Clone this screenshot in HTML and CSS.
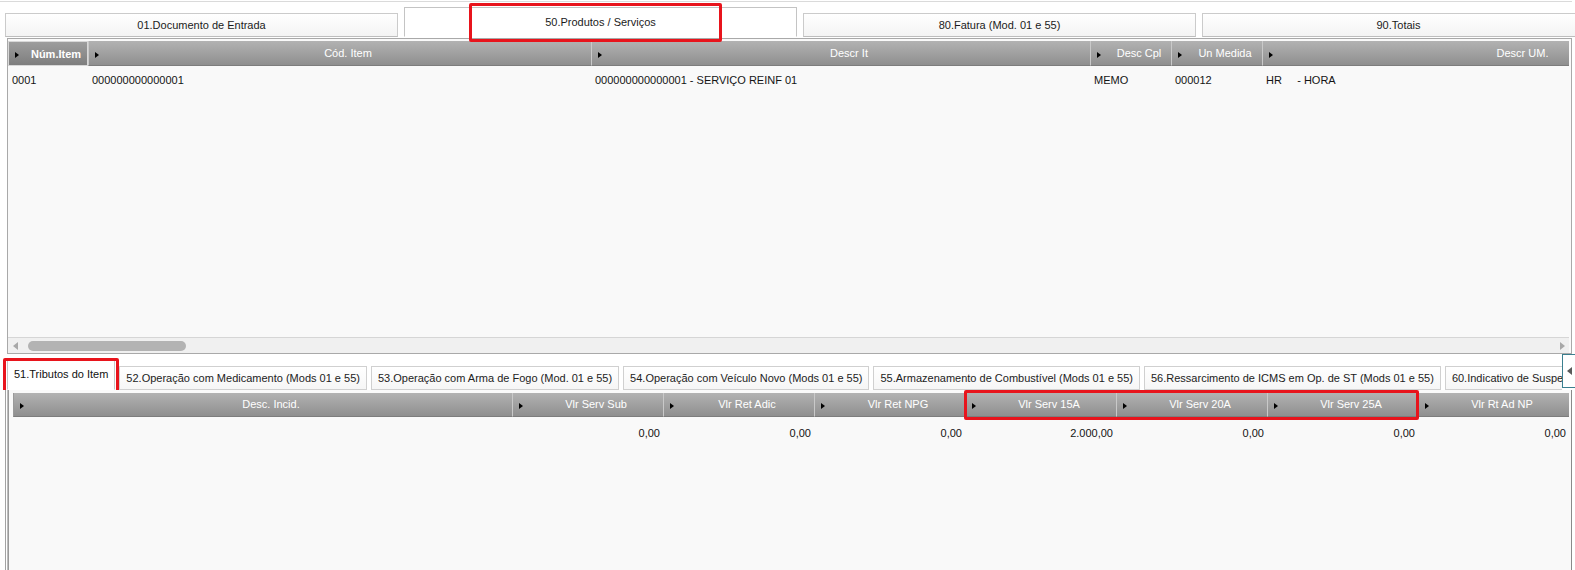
FILE: index.html
```html
<!DOCTYPE html>
<html lang="pt">
<head>
<meta charset="utf-8">
<title>Produtos / Serviços</title>
<link rel="stylesheet" href="styles.css">
</head>
<body>
<div class="top-rule"></div>
<div class="top-tabs">
  <div class="tab">01.Documento de Entrada</div>
  <div class="tab active">50.Produtos / Serviços<span class="mark mark-top"></span></div>
  <div class="tab">80.Fatura (Mod. 01 e 55)</div>
  <div class="tab">90.Totais</div>
</div>

<div class="grid grid-top">
  <div class="view">
    <div class="hdr">
      <div class="hc sel w80"><i class="tri"></i><span>Núm.Item</span></div>
      <div class="hc w503"><i class="tri"></i><span>Cód. Item</span></div>
      <div class="hc w499"><i class="tri"></i><span>Descr It</span></div>
      <div class="hc w81"><i class="tri"></i><span>Desc Cpl</span></div>
      <div class="hc w91"><i class="tri"></i><span>Un Medida</span></div>
      <div class="hc w504"><i class="tri"></i><span>Descr UM.</span></div>
    </div>
    <div class="row">
      <div class="dc w80">0001</div>
      <div class="dc w503">000000000000001</div>
      <div class="dc w499">000000000000001 - SERVIÇO REINF 01</div>
      <div class="dc w81">MEMO</div>
      <div class="dc w91">000012</div>
      <div class="dc w504 pre">HR     - HORA</div>
    </div>
  </div>
  <div class="hscroll">
    <i class="arr-l"></i>
    <div class="thumb"></div>
    <i class="arr-r"></i>
  </div>
</div>

<div class="sub-bar">
  <div class="sub-tabs">
    <div class="stab active">51.Tributos do Item<span class="mark mark-sub"></span></div>
    <div class="stab">52.Operação com Medicamento (Mods 01 e 55)</div>
    <div class="stab">53.Operação com Arma de Fogo (Mod. 01 e 55)</div>
    <div class="stab">54.Operação com Veículo Novo (Mods 01 e 55)</div>
    <div class="stab">55.Armazenamento de Combustível (Mods 01 e 55)</div>
    <div class="stab">56.Ressarcimento de ICMS em Op. de ST (Mods 01 e 55)</div>
    <div class="stab">60.Indicativo de Suspensão da Exigibilidade</div>
  </div>
  <div class="scroll-btn"><i class="arr-l dark"></i></div>
</div>

<div class="bpanel">
  <div class="bgrid">
    <div class="hdr bhdr">
      <div class="hc w499"><i class="tri"></i><span>Desc. Incid.</span></div>
      <div class="hc w151"><i class="tri"></i><span>Vlr Serv Sub</span></div>
      <div class="hc w151"><i class="tri"></i><span>Vlr Ret Adic</span></div>
      <div class="hc w151"><i class="tri"></i><span>Vlr Ret NPG</span></div>
      <div class="hc w151"><i class="tri"></i><span>Vlr Serv 15A</span></div>
      <div class="hc w151"><i class="tri"></i><span>Vlr Serv 20A</span></div>
      <div class="hc w151"><i class="tri"></i><span>Vlr Serv 25A</span></div>
      <div class="hc w151"><i class="tri"></i><span>Vlr Rt Ad NP</span></div>
      <span class="mark mark-cols"></span>
    </div>
    <div class="row brow">
      <div class="dc w499"></div>
      <div class="dc w151 num">0,00</div>
      <div class="dc w151 num">0,00</div>
      <div class="dc w151 num">0,00</div>
      <div class="dc w151 num">2.000,00</div>
      <div class="dc w151 num">0,00</div>
      <div class="dc w151 num">0,00</div>
      <div class="dc w151 num">0,00</div>
    </div>
  </div>
</div>
</body>
</html>
```
FILE: styles.css
```css
* { box-sizing: border-box; }
html, body { margin: 0; padding: 0; background: #fff; }
body {
  width: 1575px;
  height: 570px;
  overflow: hidden;
  font-family: "Liberation Sans", Arial, sans-serif;
  font-size: 11px;
  color: #1b1b1b;
}

.top-rule {
  margin-top: 1px;
  height: 1px;
  width: 1572px;
  background: #dadada;
}

/* top tabs */
.top-tabs {
  display: flex;
  align-items: flex-end;
  gap: 6px;
  height: 35px;
  padding-left: 5px;
  overflow: visible;
  white-space: nowrap;
}
.tab {
  flex: 0 0 393px;
  height: 24px;
  line-height: 22px;
  text-align: center;
  background: linear-gradient(#ffffff, #f4f4f4);
  border: 1px solid #cbcbcb;
  border-bottom-color: #bdbdbd;
}
.tab.active {
  position: relative;
  height: 30px;
  line-height: 28px;
  background: #fff;
  border-color: #c4c4c4;
  border-bottom-color: #fff;
}

/* red annotation boxes */
.mark {
  position: absolute;
  border: 3px solid #e8141c;
  border-radius: 2px;
  pointer-events: none;
}
.mark-top { left: 64px; top: -5px; width: 253px; height: 39px; }
.mark-sub { left: -5px; top: -3px; width: 116px; height: 36px; }
.mark-cols { left: 951px; top: -3px; width: 455px; height: 30px; }

/* grids */
.grid-top {
  margin: 1px 3px 0 7px;
  border: 1px solid #a9a9a9;
  padding: 2px 2px 0 0;
  background: #f9f9f9;
}
.view {
  height: 296px;
  overflow: hidden;
}
.hdr {
  display: flex;
  height: 25px;
  white-space: nowrap;
}
.hc {
  flex: 0 0 auto;
  display: flex;
  align-items: center;
  padding-left: 6px;
  color: #fff;
  background: linear-gradient(#b2b2b2, #8f8f8f);
  border-left: 1px solid #c9c9c9;
  border-bottom: 1px solid #7d7d7d;
}
.hc:first-child { border-left-color: #9a9a9a; }
.hc.sel {
  background: linear-gradient(#9d9d9d, #7e7e7e);
  border: 1px solid #d8d8d8;
  font-weight: bold;
}
.hc span {
  flex: 1;
  text-align: center;
  padding-left: 6px;
  line-height: 24px;
}
.tri {
  display: block;
  width: 0;
  height: 0;
  border-left: 4px solid #000;
  border-top: 3.5px solid transparent;
  border-bottom: 3.5px solid transparent;
  margin-top: 3px;
}

.row {
  display: flex;
  padding-top: 8px;
  line-height: 13px;
  white-space: nowrap;
  color: #141414;
}
.dc {
  flex: 0 0 auto;
  padding-left: 4px;
  overflow: hidden;
}
.dc.pre { white-space: pre; }
.dc.num { text-align: right; padding: 0 3px 0 0; }

.w80 { width: 80px; }
.w503 { width: 503px; }
.w499 { width: 499px; }
.w81 { width: 81px; }
.w91 { width: 91px; }
.w504 { width: 504px; }
.w151 { width: 151px; }

/* horizontal scrollbar */
.hscroll {
  display: flex;
  align-items: center;
  height: 16px;
  padding: 0 4px 0 5px;
  background: #f0f0f0;
  border-top: 1px solid #d6d6d6;
}
.arr-l {
  display: block;
  width: 0;
  height: 0;
  border-right: 5px solid #a8a8a8;
  border-top: 4px solid transparent;
  border-bottom: 4px solid transparent;
}
.arr-l.dark { border-right-color: #5a5a5a; }
.arr-r {
  display: block;
  margin-left: auto;
  width: 0;
  height: 0;
  border-left: 5px solid #a8a8a8;
  border-top: 4px solid transparent;
  border-bottom: 4px solid transparent;
}
.thumb {
  margin-left: 10px;
  width: 158px;
  height: 10px;
  border-radius: 5px;
  background: #b3b3b3;
}

/* sub tabs */
.sub-bar {
  display: flex;
  height: 36px;
}
.sub-tabs {
  flex: 1;
  display: flex;
  align-items: flex-end;
  gap: 4px;
  padding: 0 0 0 7px;
  overflow: hidden;
  white-space: nowrap;
}
.stab {
  flex: 0 0 auto;
  height: 24px;
  line-height: 22px;
  padding: 0 6px;
  background: linear-gradient(#ffffff, #f6f6f6);
  border: 1px solid #d0d0d0;
  color: #222;
}
.stab.active {
  position: relative;
  height: 30px;
  line-height: 26px;
  background: #fff;
  border-color: #c8c8c8;
  border-bottom-color: #fff;
  color: #111;
}
.scroll-btn {
  flex: 0 0 13px;
  height: 34px;
  display: flex;
  align-items: center;
  justify-content: center;
  background: #fff;
  border: 1px solid #3b7f8f;
  border-right: none;
}

/* bottom grid */
.bpanel {
  margin-left: 5px;
  border-left: 1px solid #a3a3a3;
  padding-left: 1px;
  height: 180px;
}
.bgrid {
  height: 100%;
  border-left: 1px solid #bdbdbd;
  border-right: 1px solid #8a8a8a;
  margin-right: 3px;
  padding: 3px 0 0 5px;
  background: #f9f9f9;
  box-shadow: inset 1px 0 0 #9a9a9a;
}
.bhdr {
  position: relative;
  height: 24px;
}
.bhdr .hc span { line-height: 23px; }
.brow { padding-top: 10px; }
```
